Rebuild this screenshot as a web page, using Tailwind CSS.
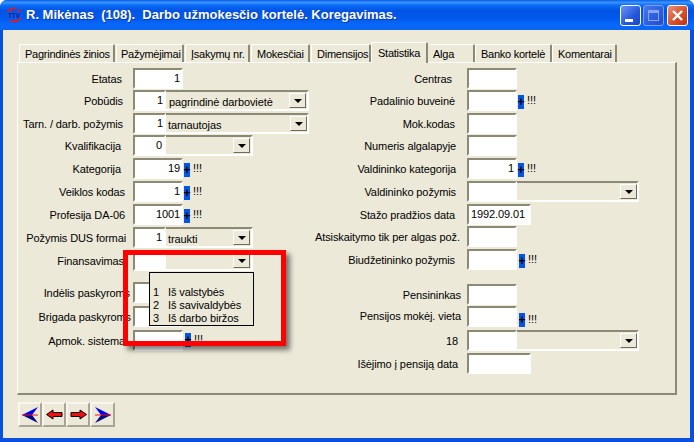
<!DOCTYPE html>
<html lang="lt">
<head>
<meta charset="UTF-8">
<title>Darbo užmokesčio kortelė</title>
<script src="https://cdn.jsdelivr.net/npm/@tailwindcss/browser@4"></script>
</head>
<body class="bg-white">
<div class="relative w-[694px] h-[442px] overflow-hidden font-['Liberation_Sans',sans-serif] text-[11px] leading-[14px] tracking-[-0.1px] text-black">
  <div class="flex flex-col h-full rounded-t-[7px] bg-[#0a50e0] overflow-hidden">

    <!-- title bar -->
    <div class="flex items-center h-[30px] shrink-0 pl-[6px] pr-[6px] bg-[linear-gradient(to_bottom,#0a5fe8_0%,#3a93ff_8%,#0a6cf5_18%,#0054e3_35%,#0058ec_60%,#0868fa_82%,#0a66f0_100%)]">
      <svg class="w-[16px] h-[16px] shrink-0" viewBox="0 0 16 16">
        <circle cx="8" cy="8" r="6.5" fill="none" stroke="#e81818" stroke-width="2" stroke-dasharray="14 3"/>
        <rect x="0" y="5" width="16" height="6" fill="#0a5ae8"/>
        <text x="8" y="10.5" font-size="6.5" font-weight="700" text-anchor="middle" fill="#0a1a90" font-family="Liberation Sans">TTV</text>
      </svg>
      <span class="ml-[4px] text-white font-bold text-[13px] tracking-normal whitespace-pre [text-shadow:1px_1px_0_#0a3aa8]">R. Mikėnas  (108).  Darbo užmokesčio kortelė. Koregavimas.</span>
      <div class="ml-auto flex gap-[2px]">
        <div class="relative w-[21px] h-[21px] rounded-[3px] border border-white bg-[linear-gradient(135deg,#6c94f4,#2456dc_60%,#1c46c4)]">
          <div class="absolute left-[4px] bottom-[3px] w-[8px] h-[3px] bg-white"></div>
        </div>
        <div class="relative w-[21px] h-[21px] rounded-[3px] border border-[#7c9cf0] bg-[linear-gradient(135deg,#4a78ea,#2a5cdc_60%,#2450c8)]">
          <div class="absolute left-[4px] top-[4px] w-[11px] h-[11px] border border-[#86a6f4] border-t-[3px]"></div>
        </div>
        <div class="relative ml-[1px] w-[21px] h-[21px] rounded-[3px] border border-white bg-[linear-gradient(135deg,#ec9078,#d8502c_55%,#b83410)]">
          <svg class="absolute left-[3px] top-[3px] w-[13px] h-[13px]" viewBox="0 0 13 13"><path d="M2 2l9 9M11 2l-9 9" stroke="#fff" stroke-width="2.4"/></svg>
        </div>
      </div>
    </div>

    <!-- client area -->
    <div class="flex-1 ml-[3px] mr-[4px] mb-[4px] pl-[14px] bg-[#ece9d8]">

      <!-- tabs -->
      <div class="flex items-end h-[32px] pl-[2px] whitespace-nowrap tracking-[-0.25px]">
        <div class="w-[96px] h-[18px] mr-[1px] pl-[5px] pt-[2px] bg-[#ece9d8] border-l border-t border-white border-r-2 border-r-[#8c8974] rounded-t-[2px]">Pagrindinės žinios</div>
        <div class="w-[68px] h-[18px] mr-[1px] pl-[4px] pt-[2px] bg-[#ece9d8] border-l border-t border-white border-r-2 border-r-[#8c8974] rounded-t-[2px]">Pažymėjimai</div>
        <div class="w-[65px] h-[18px] mr-[1px] pl-[5px] pt-[2px] bg-[#ece9d8] border-l border-t border-white border-r-2 border-r-[#8c8974] rounded-t-[2px]">Įsakymų nr.</div>
        <div class="w-[59px] h-[18px] mr-[1px] pl-[5px] pt-[2px] bg-[#ece9d8] border-l border-t border-white border-r-2 border-r-[#8c8974] rounded-t-[2px]">Mokesčiai</div>
        <div class="w-[60px] h-[18px] pl-[5px] pt-[2px] bg-[#ece9d8] border-l border-t border-white border-r-2 border-r-[#8c8974] rounded-t-[2px]">Dimensijos</div>
        <div class="relative z-10 w-[57px] h-[21px] -mb-[1px] pl-[6px] pt-[3px] bg-[#ece9d8] border-l border-t border-white border-r-2 border-r-[#8c8974] rounded-t-[2px]">Statistika</div>
        <div class="w-[46px] h-[18px] ml-[1px] pl-[4px] pt-[2px] bg-[#ece9d8] border-r-2 border-r-[#8c8974] border-t border-white rounded-t-[2px]">Alga</div>
        <div class="w-[77px] h-[18px] pl-[5px] pt-[2px] bg-[#ece9d8] border-l border-t border-white border-r-2 border-r-[#8c8974] rounded-t-[2px]">Banko kortelė</div>
        <div class="w-[65px] h-[18px] pl-[5px] pt-[2px] bg-[#ece9d8] border-l border-t border-white border-r-2 border-r-[#8c8974] rounded-t-[2px]">Komentarai</div>
      </div>

      <!-- pane -->
      <div class="flex w-[660px] h-[333px] pt-[5px] border-l border-t border-white border-r-2 border-b-2 border-r-[#8c8974] border-b-[#8c8974]">

        <!-- left column -->
        <div class="w-[297px] shrink-0">
          <div class="flex h-[22px]">
            <div class="w-[115px] pr-[11px] pt-[4px] text-right">Etatas</div>
            <div class="w-[50px] h-[21px] pr-[1px] text-right border-2 border-white border-t-[#8c8974] border-l-[#8c8974] bg-white pt-[1px]">1</div>
          </div>
          <div class="flex h-[23px]">
            <div class="w-[115px] pr-[10px] pt-[4px] text-right">Pobūdis</div>
            <div class="w-[33px] h-[21px] pr-[1px] text-right border-2 border-white border-t-[#8c8974] border-l-[#8c8974] bg-white pt-[1px]">1</div>
            <div class="flex justify-between w-[143px] h-[21px] pl-[3px] pt-[3px] border-2 border-l-0 border-white border-t-[#8c8974]">pagrindinė darbovietė
              <div class="flex items-center justify-center w-[17px] h-[15px] -mt-[2px] mr-[1px] bg-[#ece9d8] border border-t-white border-l-white border-r-[#6e6b5c] border-b-[#6e6b5c]"><div class="border-x-[4px] border-x-transparent border-t-[4px] border-t-black"></div></div>
            </div>
          </div>
          <div class="flex h-[22px]">
            <div class="w-[115px] pr-[10px] pt-[4px] text-right whitespace-nowrap">Tarn. / darb. požymis</div>
            <div class="w-[33px] h-[21px] pr-[1px] text-right border-2 border-white border-t-[#8c8974] border-l-[#8c8974] bg-white pt-[1px]">1</div>
            <div class="flex justify-between w-[143px] h-[21px] pl-[2px] pt-[3px] border-2 border-l-0 border-white border-t-[#8c8974]">tarnautojas
              <div class="flex items-center justify-center w-[17px] h-[15px] -mt-[2px] bg-[#ece9d8] border border-t-white border-l-white border-r-[#6e6b5c] border-b-[#6e6b5c]"><div class="border-x-[4px] border-x-transparent border-t-[4px] border-t-black"></div></div>
            </div>
          </div>
          <div class="flex h-[23px]">
            <div class="w-[115px] pr-[12px] pt-[4px] text-right">Kvalifikacija</div>
            <div class="w-[33px] h-[21px] pr-[2px] text-right border-2 border-white border-t-[#8c8974] border-l-[#8c8974] bg-white pt-[1px]">0</div>
            <div class="flex justify-end w-[87px] h-[21px] pt-[3px] border-2 border-l-0 border-white border-t-[#8c8974]">
              <div class="flex items-center justify-center w-[17px] h-[15px] -mt-[2px] mr-[1px] bg-[#ece9d8] border border-t-white border-l-white border-r-[#6e6b5c] border-b-[#6e6b5c]"><div class="border-x-[4px] border-x-transparent border-t-[4px] border-t-black"></div></div>
            </div>
          </div>
          <div class="flex h-[23px]">
            <div class="w-[115px] pr-[12px] pt-[4px] text-right">Kategorija</div>
            <div class="w-[50px] h-[21px] pr-[1px] text-right border-2 border-white border-t-[#8c8974] border-l-[#8c8974] bg-white pt-[1px]">19</div>
            <div class="flex justify-center w-[6px] h-[14px] mt-[5px] ml-[1px] bg-[#0055e5] font-bold text-[12px]">+</div>
            <div class="ml-[3px] mt-[3px]">!!!</div>
          </div>
          <div class="flex h-[23px]">
            <div class="w-[115px] pr-[8px] pt-[4px] text-right">Veiklos kodas</div>
            <div class="w-[50px] h-[21px] pr-[1px] text-right border-2 border-white border-t-[#8c8974] border-l-[#8c8974] bg-white pt-[1px]">1</div>
            <div class="flex justify-center w-[6px] h-[14px] mt-[5px] ml-[1px] bg-[#0055e5] font-bold text-[12px]">+</div>
            <div class="ml-[3px] mt-[3px]">!!!</div>
          </div>
          <div class="flex h-[23px]">
            <div class="w-[115px] pr-[8px] pt-[4px] text-right">Profesija DA-06</div>
            <div class="w-[50px] h-[21px] pr-[1px] text-right border-2 border-white border-t-[#8c8974] border-l-[#8c8974] bg-white pt-[1px]">1001</div>
            <div class="flex justify-center w-[6px] h-[14px] mt-[5px] ml-[1px] bg-[#0055e5] font-bold text-[12px]">+</div>
            <div class="ml-[3px] mt-[3px]">!!!</div>
          </div>
          <div class="flex h-[23px]">
            <div class="w-[115px] pr-[7px] pt-[4px] text-right whitespace-nowrap">Požymis DUS formai</div>
            <div class="w-[33px] h-[21px] pr-[2px] text-right border-2 border-white border-t-[#8c8974] border-l-[#8c8974] bg-white pt-[1px]">1</div>
            <div class="flex justify-between w-[87px] h-[21px] pl-[2px] pt-[3px] border-2 border-l-0 border-white border-t-[#8c8974]">traukti
              <div class="flex items-center justify-center w-[17px] h-[15px] -mt-[2px] mr-[1px] bg-[#ece9d8] border border-t-white border-l-white border-r-[#6e6b5c] border-b-[#6e6b5c]"><div class="border-x-[4px] border-x-transparent border-t-[4px] border-t-black"></div></div>
            </div>
          </div>
          <div class="flex h-[32px]">
            <div class="w-[115px] pr-[9px] pt-[4px] text-right">Finansavimas</div>
            <div class="w-[33px] h-[21px] border-2 border-white border-t-[#8c8974] border-l-[#8c8974] bg-white"></div>
            <div class="flex justify-end w-[87px] h-[21px] pt-[3px] border-2 border-l-0 border-white border-t-[#8c8974]">
              <div class="flex items-center justify-center w-[17px] h-[15px] -mt-[2px] mr-[1px] bg-[#ece9d8] border border-t-white border-l-white border-r-[#6e6b5c] border-b-[#6e6b5c]"><div class="border-x-[4px] border-x-transparent border-t-[4px] border-t-black"></div></div>
            </div>
          </div>
          <div class="flex h-[24px]">
            <div class="w-[112px] mr-[3px] pt-[4px] text-right whitespace-nowrap">Indėlis paskyroms</div>
            <div class="w-[50px] h-[21px] border-2 border-white border-t-[#8c8974] border-l-[#8c8974] bg-white"></div>
          </div>
          <div class="flex h-[24px]">
            <div class="w-[113px] mr-[2px] pt-[4px] text-right whitespace-nowrap">Brigada paskyroms</div>
            <div class="w-[50px] h-[21px] border-2 border-white border-t-[#8c8974] border-l-[#8c8974] bg-white"></div>
          </div>
          <div class="flex h-[23px]">
            <div class="w-[115px] pr-[8px] pt-[4px] text-right whitespace-nowrap">Apmok. sistema</div>
            <div class="w-[50px] h-[21px] border-2 border-white border-t-[#8c8974] border-l-[#8c8974] bg-white"></div>
            <div class="flex justify-center w-[6px] h-[14px] mt-[3px] ml-[2px] bg-[#0055e5] font-bold text-[12px]">+</div>
            <div class="ml-[3px] mt-[2px]">!!!</div>
          </div>
        </div>

        <!-- right column -->
        <div class="w-[360px]">
          <div class="flex h-[22px]">
            <div class="w-[152px] pr-[15px] pt-[4px] text-right">Centras</div>
            <div class="w-[50px] h-[21px] border-2 border-white border-t-[#8c8974] border-l-[#8c8974] bg-white"></div>
          </div>
          <div class="flex h-[23px]">
            <div class="w-[152px] pr-[12px] pt-[4px] text-right">Padalinio buveinė</div>
            <div class="w-[50px] h-[21px] border-2 border-white border-t-[#8c8974] border-l-[#8c8974] bg-white"></div>
            <div class="flex justify-center w-[6px] h-[14px] mt-[5px] ml-[1px] bg-[#0055e5] font-bold text-[12px]">+</div>
            <div class="ml-[3px] mt-[3px]">!!!</div>
          </div>
          <div class="flex h-[22px]">
            <div class="w-[152px] pr-[12px] pt-[4px] text-right">Mok.kodas</div>
            <div class="w-[50px] h-[21px] border-2 border-white border-t-[#8c8974] border-l-[#8c8974] bg-white"></div>
          </div>
          <div class="flex h-[23px]">
            <div class="w-[152px] pr-[11px] pt-[4px] text-right">Numeris algalapyje</div>
            <div class="w-[50px] h-[21px] border-2 border-white border-t-[#8c8974] border-l-[#8c8974] bg-white"></div>
          </div>
          <div class="flex h-[23px]">
            <div class="w-[152px] pr-[11px] pt-[4px] text-right">Valdininko kategorija</div>
            <div class="w-[50px] h-[21px] pr-[1px] text-right border-2 border-white border-t-[#8c8974] border-l-[#8c8974] bg-white pt-[1px]">1</div>
            <div class="flex justify-center w-[6px] h-[14px] mt-[5px] ml-[1px] bg-[#0055e5] font-bold text-[12px]">+</div>
            <div class="ml-[3px] mt-[3px]">!!!</div>
          </div>
          <div class="flex h-[23px]">
            <div class="w-[152px] pr-[11px] pt-[4px] text-right">Valdininko požymis</div>
            <div class="w-[50px] h-[21px] border-2 border-white border-t-[#8c8974] border-l-[#8c8974] bg-white"></div>
            <div class="flex justify-end w-[122px] h-[21px] pt-[3px] border-2 border-l-0 border-white border-t-[#8c8974]">
              <div class="flex items-center justify-center w-[17px] h-[15px] -mt-[2px] bg-[#ece9d8] border border-t-white border-l-white border-r-[#6e6b5c] border-b-[#6e6b5c]"><div class="border-x-[4px] border-x-transparent border-t-[4px] border-t-black"></div></div>
            </div>
          </div>
          <div class="flex h-[22px]">
            <div class="w-[152px] pr-[12px] pt-[4px] text-right">Stažo pradžios data</div>
            <div class="w-[64px] h-[21px] pl-[2px] border-2 border-white border-t-[#8c8974] border-l-[#8c8974] bg-white pt-[1px]">1992.09.01</div>
          </div>
          <div class="flex h-[23px]">
            <div class="w-[152px] pr-[12px] pt-[4px] text-right whitespace-nowrap">Atsiskaitymo tik per algas pož.</div>
            <div class="w-[50px] h-[21px] border-2 border-white border-t-[#8c8974] border-l-[#8c8974] bg-white"></div>
          </div>
          <div class="flex h-[35px]">
            <div class="w-[152px] pr-[12px] pt-[4px] text-right">Biudžetininko požymis</div>
            <div class="w-[50px] h-[21px] border-2 border-white border-t-[#8c8974] border-l-[#8c8974] bg-white"></div>
            <div class="flex justify-center w-[6px] h-[14px] mt-[5px] ml-[2px] bg-[#0055e5] font-bold text-[12px]">+</div>
            <div class="ml-[3px] mt-[3px]">!!!</div>
          </div>
          <div class="flex h-[22px]">
            <div class="w-[152px] pr-[6px] pt-[4px] text-right">Pensininkas</div>
            <div class="w-[50px] h-[21px] border-2 border-white border-t-[#8c8974] border-l-[#8c8974] bg-white"></div>
          </div>
          <div class="flex h-[24px]">
            <div class="w-[152px] pr-[6px] pt-[3px] text-right">Pensijos mokėj. vieta</div>
            <div class="w-[50px] h-[21px] border-2 border-white border-t-[#8c8974] border-l-[#8c8974] bg-white"></div>
            <div class="flex justify-center w-[6px] h-[14px] mt-[7px] ml-[2px] bg-[#0055e5] font-bold text-[12px]">+</div>
            <div class="ml-[3px] mt-[6px]">!!!</div>
          </div>
          <div class="flex h-[23px]">
            <div class="w-[152px] pr-[9px] pt-[4px] text-right">18</div>
            <div class="w-[50px] h-[21px] border-2 border-white border-t-[#8c8974] border-l-[#8c8974] bg-white"></div>
            <div class="flex justify-end w-[122px] h-[21px] pt-[3px] border-2 border-l-0 border-white border-t-[#8c8974]">
              <div class="flex items-center justify-center w-[17px] h-[15px] -mt-[2px] bg-[#ece9d8] border border-t-white border-l-white border-r-[#6e6b5c] border-b-[#6e6b5c]"><div class="border-x-[4px] border-x-transparent border-t-[4px] border-t-black"></div></div>
            </div>
          </div>
          <div class="flex h-[22px]">
            <div class="w-[152px] pr-[9px] pt-[4px] text-right">Išėjimo į pensiją data</div>
            <div class="w-[64px] h-[21px] border-2 border-white border-t-[#8c8974] border-l-[#8c8974] bg-white"></div>
          </div>
        </div>
      </div>

      <!-- navigation buttons -->
      <div class="flex mt-[7px] ml-[1px]">
        <div class="flex items-center justify-center w-[24px] h-[25px] border-2 border-t-[#f8f6ee] border-l-[#f8f6ee] border-r-[#a8a594] border-b-[#a8a594]">
          <svg class="w-[17px] h-[16px]" viewBox="0 0 17 16"><path d="M0 8L16 0L10 8Z" fill="#0000ee"/><path d="M0 8L16 16L10 8Z" fill="#000a80"/><path d="M0 8H16" stroke="#ee1111"/></svg>
        </div>
        <div class="flex items-center justify-center w-[24px] h-[25px] border-2 border-t-[#f8f6ee] border-l-[#f8f6ee] border-r-[#a8a594] border-b-[#a8a594]">
          <svg class="w-[17px] h-[11px]" viewBox="0 0 17 11"><path d="M0.5 5.5L7 1V3.5H16V7.5H7V10Z" fill="#ee1111" stroke="#000"/></svg>
        </div>
        <div class="flex items-center justify-center w-[24px] h-[25px] border-2 border-t-[#f8f6ee] border-l-[#f8f6ee] border-r-[#a8a594] border-b-[#a8a594]">
          <svg class="w-[17px] h-[11px]" viewBox="0 0 17 11"><path d="M16.5 5.5L10 1V3.5H1V7.5H10V10Z" fill="#ee1111" stroke="#000"/></svg>
        </div>
        <div class="flex items-center justify-center w-[25px] h-[25px] border-2 border-t-[#f8f6ee] border-l-[#f8f6ee] border-r-[#a8a594] border-b-[#a8a594]">
          <svg class="w-[17px] h-[16px]" viewBox="0 0 17 16"><path d="M17 8L1 0L7 8Z" fill="#0000ee"/><path d="M17 8L1 16L7 8Z" fill="#000a80"/><path d="M1 8H17" stroke="#ee1111"/></svg>
        </div>
      </div>
    </div>
  </div>

  <!-- dropdown hint -->
  <div class="absolute left-[149px] top-[272px] w-[105px] h-[54px] pt-[13px] pl-[3px] bg-[#ece9d8] border border-black leading-[13px]">
    <div class="flex"><span class="w-[15px]">1</span>Iš valstybės</div>
    <div class="flex"><span class="w-[15px]">2</span>Iš savivaldybės</div>
    <div class="flex"><span class="w-[15px]">3</span>Iš darbo biržos</div>
  </div>

  <!-- red annotation frame -->
  <div class="absolute left-[123px] top-[250px] w-[163px] h-[96px] border-[5px] border-[#ff0000] shadow-[4px_4px_5px_rgba(0,0,0,0.5)]"></div>
</div>
</body>
</html>
